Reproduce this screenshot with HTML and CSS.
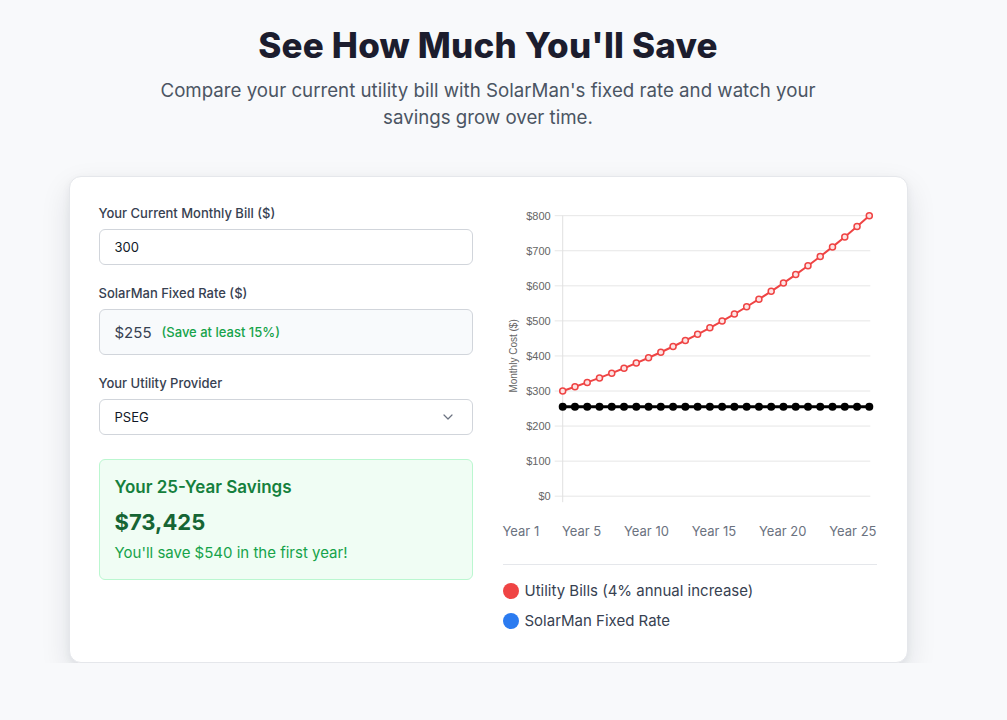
FILE: index.html
```html
<!DOCTYPE html>
<html lang="en">
<head>
<meta charset="utf-8">
<title>See How Much You'll Save</title>
<link rel="stylesheet" href="styles.css">
</head>
<body>
<main class="page">
  <header class="intro">
    <h1 class="title">See How Much You'll Save</h1>
    <p class="subtitle">Compare your current utility bill with SolarMan's fixed rate and watch your savings grow over time.</p>
  </header>

  <section class="card">
    <div class="form-col">
      <div class="field">
        <label class="label" for="bill">Your Current Monthly Bill ($)</label>
        <input class="input" id="bill" type="text" value="300">
      </div>
      <div class="field">
        <span class="label">SolarMan Fixed Rate ($)</span>
        <div class="rate-box">
          <span class="rate">$255</span>
          <span class="rate-note">(Save at least 15%)</span>
        </div>
      </div>
      <div class="field">
        <label class="label" for="provider">Your Utility Provider</label>
        <div class="select">
          <span>PSEG</span>
          <svg class="chevron" width="10" height="6" viewBox="0 0 10 6"><path d="M1 1l4 4 4-4" fill="none" stroke="#6b7280" stroke-width="1.2" stroke-linecap="round" stroke-linejoin="round"/></svg>
        </div>
      </div>
      <div class="savings">
        <div class="savings-title">Your 25-Year Savings</div>
        <div class="savings-amount">$73,425</div>
        <div class="savings-note">You'll save $540 in the first year!</div>
      </div>
    </div>

    <div class="chart-col">
      <svg id="chart" class="chart" width="374" height="302" viewBox="0 0 374 302"></svg>
      <div class="x-labels">
        <span>Year 1</span><span>Year 5</span><span>Year 10</span><span>Year 15</span><span>Year 20</span><span>Year 25</span>
      </div>
      <div class="legend">
        <div class="legend-item"><span class="dot dot-red"></span>Utility Bills (4% annual increase)</div>
        <div class="legend-item"><span class="dot dot-blue"></span>SolarMan Fixed Rate</div>
      </div>
    </div>
  </section>
</main>
<script src="script.js"></script>
</body>
</html>
```

FILE: styles.css
```css
* { box-sizing: border-box; }

html, body {
  margin: 0;
  padding: 0;
  background: #f8f9fb;
  font-family: Inter, "Noto Sans", sans-serif;
  color: #374151;
}

.page {
  width: 976px;
  padding-top: 24px;
  display: flex;
  flex-direction: column;
  align-items: center;
}

.intro {
  text-align: center;
  display: flex;
  flex-direction: column;
  align-items: center;
}

.title {
  margin: 0;
  font-size: 35px;
  line-height: 42px;
  font-weight: 800;
  color: #1c1d2e;
  letter-spacing: 0.2px;
}

.subtitle {
  margin: 11px 0 0;
  max-width: 680px;
  font-size: 18.7px;
  line-height: 27px;
  color: #4b5563;
}

.card {
  margin-top: 45px;
  width: 839px;
  background: #fff;
  border: 1px solid #e5e7eb;
  border-radius: 12px;
  box-shadow: 0 12px 30px rgba(15, 23, 42, 0.11), 0 3px 8px rgba(15, 23, 42, 0.05);
  padding: 28px 30px 31px 29px;
  display: grid;
  grid-template-columns: 374px 374px;
  column-gap: 30px;
}

.form-col {
  display: flex;
  flex-direction: column;
}

.field {
  display: flex;
  flex-direction: column;
  gap: 8px;
  margin-bottom: 20px;
}

.label {
  font-size: 13px;
  line-height: 16px;
  font-weight: 500;
  color: #374151;
}

.input {
  height: 36px;
  border: 1px solid #d1d5db;
  border-radius: 6px;
  padding: 0 15px;
  font-family: Inter, sans-serif;
  font-size: 13px;
  color: #111827;
  background: #fff;
  outline: none;
}

.rate-box {
  height: 46px;
  border: 1px solid #d1d5db;
  border-radius: 6px;
  background: #f8fafc;
  padding: 0 15px;
  display: flex;
  align-items: center;
  gap: 10px;
}

.rate {
  font-size: 15px;
  color: #374151;
}

.rate-note {
  font-size: 13px;
  color: #16a34a;
  font-weight: 500;
}

.select {
  height: 36px;
  border: 1px solid #d1d5db;
  border-radius: 6px;
  padding: 0 19px 0 15px;
  display: flex;
  align-items: center;
  justify-content: space-between;
  font-size: 13px;
  color: #111827;
  background: #fff;
}

.savings {
  margin-top: 4px;
  height: 121px;
  background: #f0fdf4;
  border: 1px solid #bbf7d0;
  border-radius: 6px;
  padding: 15px 15px;
  display: flex;
  flex-direction: column;
}

.savings-title {
  font-size: 17px;
  line-height: 24px;
  font-weight: 600;
  color: #15803d;
}

.savings-amount {
  margin-top: 9px;
  font-size: 22px;
  line-height: 28px;
  font-weight: 700;
  color: #166534;
}

.savings-note {
  margin-top: 7px;
  font-size: 15px;
  line-height: 20px;
  color: #16a34a;
}

.chart-col {
  display: flex;
  flex-direction: column;
}

.chart {
  display: block;
  font-family: "Liberation Sans", Arial, sans-serif;
}

.x-labels {
  margin-top: 14px;
  display: flex;
  justify-content: space-between;
  font-size: 13px;
  line-height: 20px;
  color: #6b7280;
}

.legend {
  margin-top: 23px;
  border-top: 1px solid #e5e7eb;
  padding-top: 16px;
  display: flex;
  flex-direction: column;
  gap: 10px;
}

.legend-item {
  display: flex;
  align-items: center;
  gap: 6px;
  font-size: 15px;
  line-height: 20px;
  color: #374151;
}

.dot {
  width: 16px;
  height: 16px;
  border-radius: 50%;
  flex: none;
}

.dot-red { background: #ef4444; }
.dot-blue { background: #2b7bf0; }
```

FILE: script.js
```js
(function () {
  var svg = document.getElementById('chart');
  var NS = 'http://www.w3.org/2000/svg';
  var L = 59.7, R = 366.3, T = 10.7, B = 291.2;
  function el(name, attrs, text) {
    var e = document.createElementNS(NS, name);
    for (var k in attrs) e.setAttribute(k, attrs[k]);
    if (text) e.textContent = text;
    svg.appendChild(e);
    return e;
  }
  function yv(v) { return B - v * (B - T) / 800; }
  function xi(i) { return L + i * (R - L) / 25; }

  for (var v = 0; v <= 800; v += 100) {
    var y = yv(v);
    el('line', { x1: L - 8, x2: R + 1, y1: y, y2: y, stroke: '#e6e6e6', 'stroke-width': 1 });
    el('text', { x: L - 12, y: y + 4, 'text-anchor': 'end', 'font-size': 11, fill: '#666' }, '$' + v);
  }
  el('line', { x1: L, x2: L, y1: T, y2: B + 6, stroke: '#e0e0e0', 'stroke-width': 1 });

  var ty = (T + B) / 2;
  el('text', { x: 0, y: 0, 'font-size': 10, fill: '#666', 'text-anchor': 'middle',
    transform: 'translate(13.5 ' + ty + ') rotate(-90)' }, 'Monthly Cost ($)');

  var red = [], black = [];
  for (var i = 0; i <= 25; i++) {
    red.push(xi(i).toFixed(2) + ',' + yv(300 * Math.pow(1.04, i)).toFixed(2));
    black.push(xi(i).toFixed(2) + ',' + yv(255).toFixed(2));
  }
  el('polyline', { points: black.join(' '), fill: 'none', stroke: '#000', 'stroke-width': 3 });
  for (i = 0; i <= 25; i++) {
    el('circle', { cx: xi(i), cy: yv(255), r: 4, fill: '#000' });
  }
  el('polyline', { points: red.join(' '), fill: 'none', stroke: '#ef4444', 'stroke-width': 2 });
  for (i = 0; i <= 25; i++) {
    el('circle', { cx: xi(i), cy: yv(300 * Math.pow(1.04, i)), r: 3, fill: '#fde3e3', stroke: '#ef4444', 'stroke-width': 1.5 });
  }
})();
```
